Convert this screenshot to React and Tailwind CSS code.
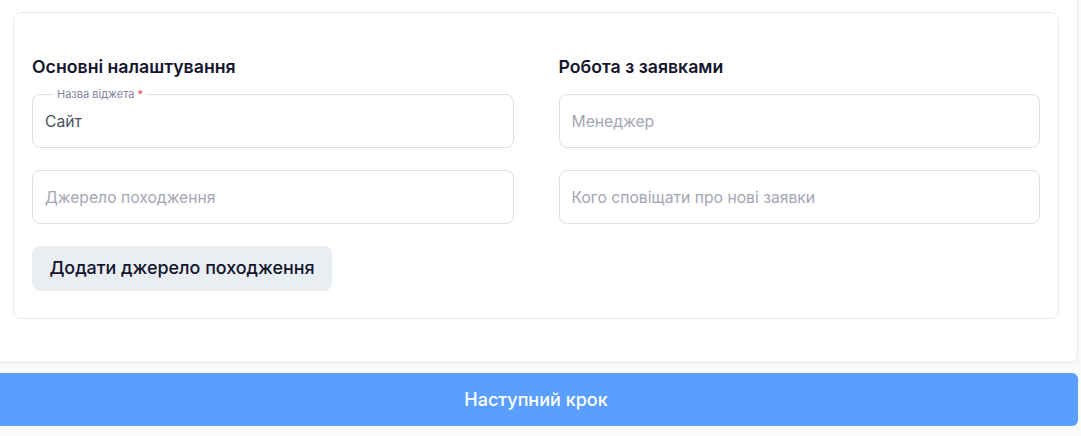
import React from "react";

function Field({ label, required, value, placeholder }) {
  return (
    <div className="relative">
      {label && (
        <span className="absolute left-[21px] -top-[7px] bg-white px-[4px] text-[11px] leading-[14px] text-[#80849a]">
          {label}
          {required && <span className="text-[#ef4444]"> *</span>}
        </span>
      )}
      <input
        defaultValue={value}
        placeholder={placeholder}
        className="block w-full h-[54px] rounded-lg border border-[#dcdfe8] bg-white px-3 text-[15.7px] text-[#4b5060] placeholder:text-[#a3a6b4] outline-none"
      />
    </div>
  );
}

export default function App() {
  return (
    <div className="min-h-[436px] bg-[#f8fafc] pr-[3px] font-['Inter',sans-serif]">
      <div className="bg-white border-r border-b border-[#e6e9ef] rounded-br-lg pl-[13px] pr-[18px] pt-[12px] pb-[43px]">
        <div className="border border-[#e6e9ef] rounded-lg pl-[18px] pr-[18px] pt-[42px] pb-[27px]">
          <div className="grid grid-cols-2 gap-x-[45px]">
            <div>
              <h2 className="text-[17.7px] leading-6 font-semibold text-[#14142e] mb-[15px]">
                Основні налаштування
              </h2>
              <div className="flex flex-col gap-[22px]">
                <Field label="Назва віджета" required value="Сайт" />
                <Field placeholder="Джерело походження" />
                <div>
                  <button className="h-[45px] w-[300px] rounded-lg bg-[#e9eef3] text-[17.9px] font-medium text-[#14142e]">
                    Додати джерело походження
                  </button>
                </div>
              </div>
            </div>
            <div>
              <h2 className="text-[17.7px] leading-6 font-semibold text-[#14142e] mb-[15px]">
                Робота з заявками
              </h2>
              <div className="flex flex-col gap-[22px]">
                <Field placeholder="Менеджер" />
                <Field placeholder="Кого сповіщати про нові заявки" />
              </div>
            </div>
          </div>
        </div>
      </div>
      <button className="mt-[10px] block w-full h-[53px] rounded-r-md bg-[#5a9eff] pr-[6px] text-white text-[18px] font-medium">
        Наступний крок
      </button>
    </div>
  );
}
